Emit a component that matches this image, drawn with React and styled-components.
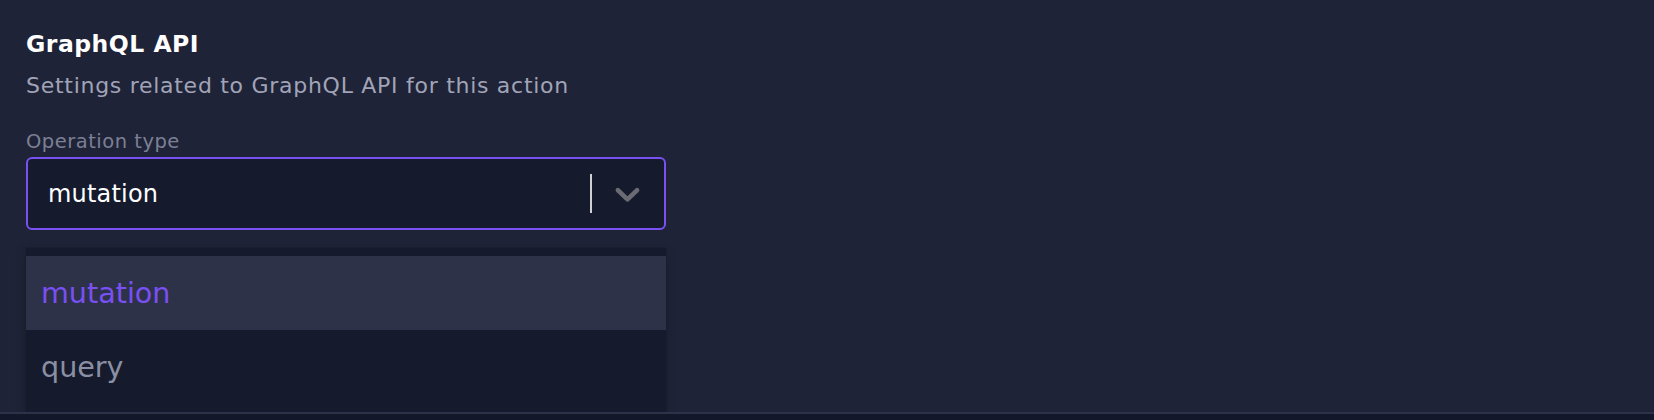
import React, { useState } from "react";
import styled, { createGlobalStyle } from "styled-components";

const colors = {
  page: "#1f2337",
  field: "#151a2d",
  purple: "#7950f2",
  white: "#ffffff",
  subtitle: "#a1a4b7",
  label: "#7c8094",
  separator: "#cfcfd4",
  chevron: "#6b6b73",
  optionActive: "#2e3249",
  optionText: "#8b8fa3",
  footer: "#13172a",
};

const GlobalStyle = createGlobalStyle`
  html, body {
    margin: 0;
    padding: 0;
    background: ${colors.page};
    font-family: "DejaVu Sans", "Noto Sans", sans-serif;
  }
`;

const Page = styled.div`
  display: flex;
  flex-direction: column;
  min-height: 100vh;
  background: ${colors.page};
`;

const Section = styled.section`
  flex: 1;
  padding: 29px 26px 0 26px;
`;

const Title = styled.h2`
  margin: 0;
  font-size: 23.5px;
  line-height: 30px;
  font-weight: 700;
  letter-spacing: 0.5px;
  color: ${colors.white};
`;

const Subtitle = styled.p`
  margin: 13px 0 0 0;
  font-size: 22px;
  line-height: 28px;
  letter-spacing: 0.72px;
  color: ${colors.subtitle};
`;

const FieldLabel = styled.label`
  display: block;
  margin-top: 30px;
  font-size: 19.5px;
  line-height: 24px;
  letter-spacing: 0.5px;
  color: ${colors.label};
`;

const SelectWrap = styled.div`
  position: relative;
  width: 640px;
  margin-top: 2.5px;
`;

const Control = styled.div`
  display: flex;
  align-items: center;
  box-sizing: border-box;
  height: 73px;
  background: ${colors.field};
  border: 2px solid ${(props) => (props.focused ? colors.purple : "#3a3f57")};
  border-radius: 6px;
  cursor: pointer;
`;

const ValueContainer = styled.div`
  flex: 1;
  padding: 2px 0 0 20px;
  font-size: 24px;
  letter-spacing: 0.2px;
  color: ${colors.white};
`;

const Separator = styled.span`
  align-self: stretch;
  width: 2px;
  margin: 15px 0;
  background: ${colors.separator};
`;

const Indicator = styled.div`
  display: flex;
  align-items: center;
  padding: 0 16px 0 15px;
  color: ${colors.chevron};
`;

const Menu = styled.div`
  position: absolute;
  top: calc(100% + 18px);
  left: 0;
  right: 0;
  padding: 8px 0;
  background: ${colors.field};
  box-shadow: 0 0 0 1px rgba(0, 0, 0, 0.08), 0 4px 11px rgba(0, 0, 0, 0.18);
  z-index: 2;
`;

const Option = styled.div`
  display: flex;
  align-items: center;
  height: 74px;
  padding-left: 15px;
  font-size: 28.6px;
  color: ${(props) => (props.selected ? colors.purple : colors.optionText)};
  background: ${(props) => (props.selected ? colors.optionActive : "transparent")};
  cursor: pointer;
`;

const Footer = styled.footer`
  height: 6px;
  border-top: 2px solid ${colors.optionActive};
  background: ${colors.footer};
  position: relative;
  z-index: 3;
`;

const ChevronDown = () => (
  <svg width="41" height="41" viewBox="0 0 20 20" fill="currentColor" aria-hidden="true">
    <path d="M4.516 7.548c0.436-0.446 1.043-0.481 1.576 0l3.908 3.747 3.908-3.747c0.533-0.481 1.141-0.446 1.574 0 0.436 0.445 0.408 1.197 0 1.615-0.406 0.418-4.695 4.502-4.695 4.502-0.217 0.223-0.502 0.335-0.787 0.335s-0.57-0.112-0.789-0.335c0 0-4.287-4.084-4.695-4.502s-0.436-1.17 0-1.615z" />
  </svg>
);

const operationTypes = ["mutation", "query"];

const App = () => {
  const [value, setValue] = useState("mutation");
  const [open, setOpen] = useState(true);

  return (
    <Page>
      <GlobalStyle />
      <Section>
        <Title>GraphQL API</Title>
        <Subtitle>Settings related to GraphQL API for this action</Subtitle>
        <FieldLabel>Operation type</FieldLabel>
        <SelectWrap>
          <Control focused onClick={() => setOpen(!open)}>
            <ValueContainer>{value}</ValueContainer>
            <Separator />
            <Indicator>
              <ChevronDown />
            </Indicator>
          </Control>
          {open && (
            <Menu>
              {operationTypes.map((t) => (
                <Option
                  key={t}
                  selected={t === value}
                  onClick={() => {
                    setValue(t);
                    setOpen(false);
                  }}
                >
                  {t}
                </Option>
              ))}
            </Menu>
          )}
        </SelectWrap>
      </Section>
      <Footer />
    </Page>
  );
};

export default App;
